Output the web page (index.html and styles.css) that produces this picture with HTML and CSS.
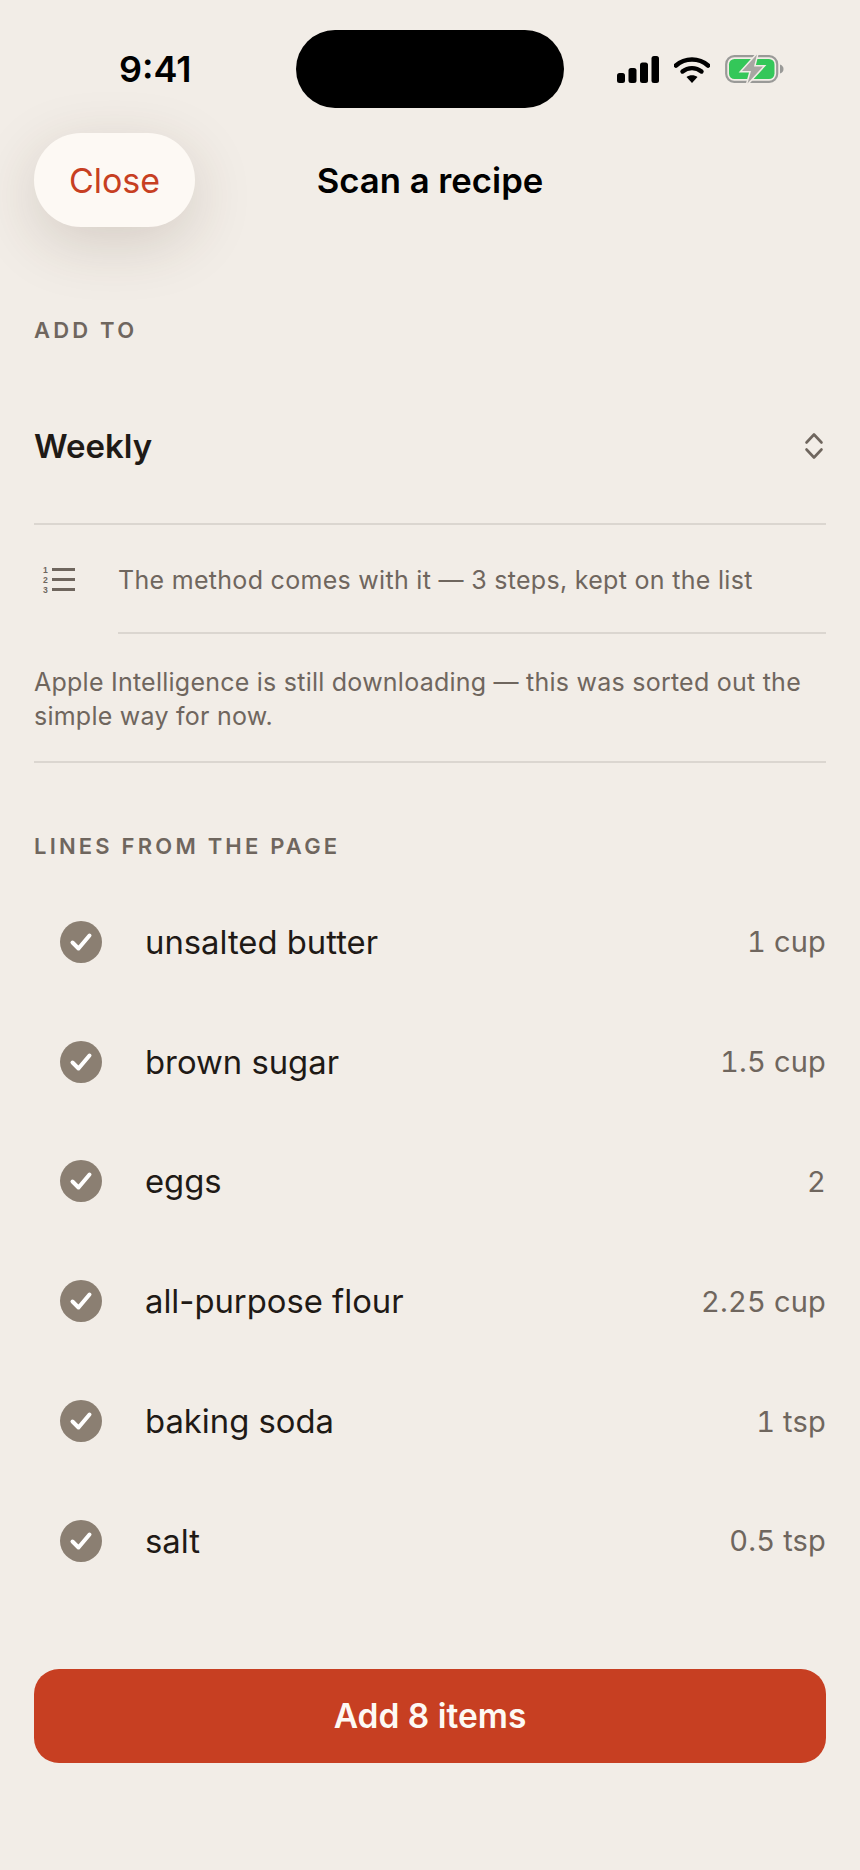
FILE: index.html
```html
<!DOCTYPE html>
<html lang="en">

<head>
    <meta charset="UTF-8">
    <meta name="viewport" content="width=device-width, initial-scale=1.0">
    <link rel="stylesheet" href="styles.css">
    <title>Scan a recipe</title>
</head>

<body>
    <div class="screen">
        <div class="status-bar">
            <span class="time">9:41</span>
            <div class="island"></div>
            <div class="status-icons">
                <svg width="42" height="27" viewBox="0 0 42 27">
                    <rect x="0" y="17" width="8" height="10" rx="2.5" fill="#000" />
                    <rect x="11.5" y="12" width="8" height="15" rx="2.5" fill="#000" />
                    <rect x="23" y="6.5" width="8" height="20.5" rx="2.5" fill="#000" />
                    <rect x="34.5" y="0" width="7.5" height="27" rx="2.5" fill="#000" />
                </svg>
                <svg width="36" height="27" viewBox="0 0 36 27">
                    <path d="M2 9.5 C11 1.5 25 1.5 34 9.5" fill="none" stroke="#000" stroke-width="4.6" stroke-linecap="round" />
                    <path d="M8.5 15.5 C14 11 22 11 27.5 15.5" fill="none" stroke="#000" stroke-width="4.4" stroke-linecap="round" />
                    <path d="M18 27 L12.5 21 C15.5 18.6 20.5 18.6 23.5 21 Z" fill="#000" />
                </svg>
                <svg width="59" height="30" viewBox="0 0 59 30">
                    <rect x="1.2" y="2.2" width="51" height="25.6" rx="8" fill="none" stroke="#9a9a98" stroke-width="2.2" />
                    <rect x="4" y="5" width="45.5" height="20" rx="5.5" fill="#34c759" />
                    <path d="M55 10.5 C57.5 11.5 58.5 13 58.5 15 C58.5 17 57.5 18.5 55 19.5 Z" fill="#9a9a98" />
                    <path class="bolt" d="M32 0.5 L17 17 H26 L22.5 29.5 L38 12.5 H29 Z" />
                </svg>
            </div>
        </div>

        <div class="nav-bar">
            <button class="close-button">Close</button>
            <h1 class="nav-title">Scan a recipe</h1>
        </div>

        <div class="section-label add-label">ADD TO</div>

        <div class="picker-row">
            <span class="picker-name">Weekly</span>
            <svg class="chevrons" width="20" height="28" viewBox="0 0 20 28">
                <path d="M2.5 10.5 L10 2.5 L17.5 10.5" fill="none" stroke="#6f665e" stroke-width="2.6" stroke-linecap="round" stroke-linejoin="round" />
                <path d="M2.5 17.5 L10 25.5 L17.5 17.5" fill="none" stroke="#6f665e" stroke-width="2.6" stroke-linecap="round" stroke-linejoin="round" />
            </svg>
        </div>

        <div class="method-row">
            <div class="method-icon">
                <div class="num-col">1<br>2<br>3</div>
                <div class="line-col"><i></i><i></i><i></i></div>
            </div>
            <div class="method-text">The method comes with it — 3 steps, kept on the list</div>
        </div>

        <p class="note">Apple Intelligence is still downloading — this was sorted out the simple way for now.</p>

        <div class="section-label lines-label">LINES FROM THE PAGE</div>

        <ul class="lines">
            <li class="line"><span class="check"><svg width="24" height="20" viewBox="0 0 24 20"><path d="M3.5 10.5 L9.5 16.5 L20.5 3.5" fill="none" stroke="#fff" stroke-width="4" stroke-linecap="round" stroke-linejoin="round" /></svg></span><span class="line-name">unsalted butter</span><span class="line-qty">1 cup</span></li>
            <li class="line"><span class="check"><svg width="24" height="20" viewBox="0 0 24 20"><path d="M3.5 10.5 L9.5 16.5 L20.5 3.5" fill="none" stroke="#fff" stroke-width="4" stroke-linecap="round" stroke-linejoin="round" /></svg></span><span class="line-name">brown sugar</span><span class="line-qty">1.5 cup</span></li>
            <li class="line"><span class="check"><svg width="24" height="20" viewBox="0 0 24 20"><path d="M3.5 10.5 L9.5 16.5 L20.5 3.5" fill="none" stroke="#fff" stroke-width="4" stroke-linecap="round" stroke-linejoin="round" /></svg></span><span class="line-name">eggs</span><span class="line-qty">2</span></li>
            <li class="line"><span class="check"><svg width="24" height="20" viewBox="0 0 24 20"><path d="M3.5 10.5 L9.5 16.5 L20.5 3.5" fill="none" stroke="#fff" stroke-width="4" stroke-linecap="round" stroke-linejoin="round" /></svg></span><span class="line-name">all-purpose flour</span><span class="line-qty">2.25 cup</span></li>
            <li class="line"><span class="check"><svg width="24" height="20" viewBox="0 0 24 20"><path d="M3.5 10.5 L9.5 16.5 L20.5 3.5" fill="none" stroke="#fff" stroke-width="4" stroke-linecap="round" stroke-linejoin="round" /></svg></span><span class="line-name">baking soda</span><span class="line-qty">1 tsp</span></li>
            <li class="line"><span class="check"><svg width="24" height="20" viewBox="0 0 24 20"><path d="M3.5 10.5 L9.5 16.5 L20.5 3.5" fill="none" stroke="#fff" stroke-width="4" stroke-linecap="round" stroke-linejoin="round" /></svg></span><span class="line-name">salt</span><span class="line-qty">0.5 tsp</span></li>
        </ul>

        <button class="add-button">Add 8 items</button>
    </div>
</body>

</html>
```

FILE: styles.css
```css
body {
    margin: 0;
    font-family: Inter, "Noto Sans", sans-serif;
    background-color: #f2ede7;
    color: #1f1a16;
}

.screen {
    width: 860px;
    height: 1870px;
    box-sizing: border-box;
    padding: 30px 34px 0;
    overflow: hidden;
}

/* status bar */
.status-bar {
    display: grid;
    grid-template-columns: 1fr 268px 1fr;
    height: 78px;
    align-items: center;
}

.time {
    font-size: 36px;
    font-weight: 600;
    color: #000;
    justify-self: start;
    margin-left: 85px;
}

.island {
    height: 78px;
    background-color: #000;
    border-radius: 39px;
}

.status-icons {
    display: flex;
    align-items: center;
    gap: 15px;
    justify-self: start;
    margin-left: 53px;
}

.bolt {
    fill: #a8a6a3;
    stroke: #f2ede7;
    stroke-width: 3;
    paint-order: stroke;
}

/* nav */
.nav-bar {
    display: grid;
    grid-template-columns: 161px 1fr 161px;
    align-items: center;
    margin-top: 25px;
}

.close-button {
    height: 94px;
    border: none;
    border-radius: 47px;
    background-color: #fdf9f4;
    color: #c73f22;
    font-family: inherit;
    font-size: 34px;
    padding: 0;
    box-shadow: 0 16px 60px rgba(70, 50, 30, 0.17);
}

.nav-title {
    margin: 0;
    font-size: 34.7px;
    font-weight: 600;
    color: #000;
    text-align: center;
}

.section-label {
    font-size: 22px;
    font-weight: 600;
    letter-spacing: 3.2px;
    color: #6f665e;
    line-height: 28px;
}

.add-label {
    margin-top: 89px;
}

.picker-row {
    display: flex;
    align-items: center;
    justify-content: space-between;
    height: 155px;
    margin-top: 24px;
    border-bottom: 2px solid #dbd6d0;
    padding-right: 2px;
}

.picker-name {
    font-size: 33px;
    font-weight: 600;
}

.method-row {
    display: flex;
    align-items: stretch;
}

.method-icon {
    width: 84px;
    flex-shrink: 0;
    display: flex;
    align-items: center;
    gap: 3px;
    padding-left: 8px;
    box-sizing: border-box;
}

.num-col {
    font-family: "Liberation Sans", sans-serif;
    font-size: 8.6px;
    line-height: 10px;
    font-weight: 700;
    color: #6f665e;
    width: 7px;
    text-align: center;
}

.line-col {
    display: flex;
    flex-direction: column;
    gap: 7.5px;
}

.line-col i {
    display: block;
    width: 23px;
    height: 2.5px;
    background-color: #6f665e;
}

.method-text {
    flex: 1;
    height: 107px;
    line-height: 110px;
    font-size: 25px;
    color: #6f665e;
    letter-spacing: 0.3px;
    border-bottom: 2px solid #dbd6d0;
}

.note {
    margin: 0;
    padding: 31px 0 28px;
    font-size: 25px;
    line-height: 34px;
    letter-spacing: 0.24px;
    color: #6f665e;
    border-bottom: 2px solid #dbd6d0;
}

.lines-label {
    margin-top: 69px;
}

.lines {
    list-style: none;
    margin: 22px 0 0;
    padding: 0;
}

.line {
    display: flex;
    align-items: center;
    height: 119.8px;
}

.check {
    width: 42px;
    height: 42px;
    border-radius: 50%;
    background-color: #8b7f72;
    display: flex;
    align-items: center;
    justify-content: center;
    margin-left: 26px;
    margin-right: 43px;
}

.line-name {
    flex: 1;
    font-size: 32.8px;
}

.line-qty {
    font-size: 29px;
    color: #6f665e;
    font-variant-numeric: tabular-nums;
    letter-spacing: 0.2px;
}

.add-button {
    display: block;
    width: 100%;
    height: 94px;
    margin-top: 68px;
    border: none;
    border-radius: 25px;
    background-color: #c73f22;
    color: #fdf9f4;
    font-family: inherit;
    font-size: 33.5px;
    font-weight: 600;
}
```
